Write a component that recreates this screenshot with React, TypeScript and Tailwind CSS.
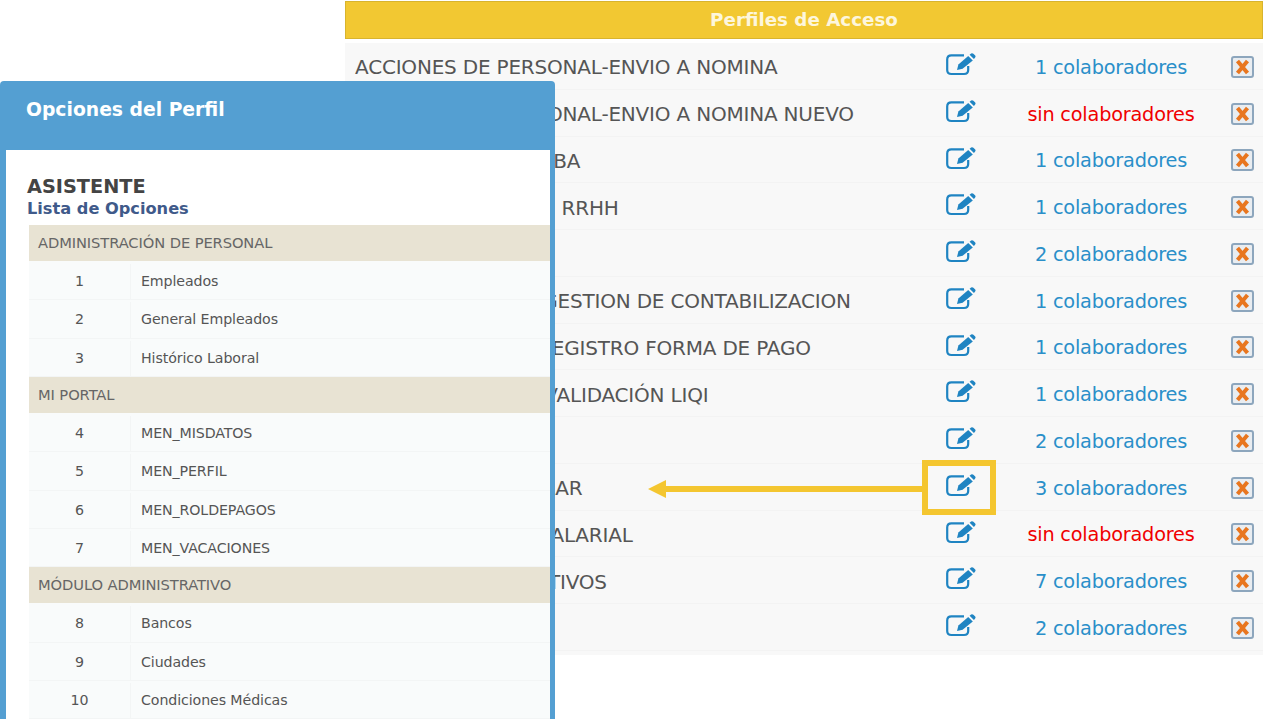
const perfiles = [
  { name: "ACCIONES DE PERSONAL-ENVIO A NOMINA", count: "1 colaboradores" },
  { name: "ACCIONES DE PERSONAL-ENVIO A NOMINA NUEVO", count: "sin colaboradores" },
  { name: "ANALISTA DEL PRUEBA", count: "1 colaboradores" },
  { name: "ASISTENTE GRAL DE RRHH", count: "1 colaboradores" },
  { name: "ASISTENTE", count: "2 colaboradores" },
  { name: "ASISTENTE ANUAL GESTION DE CONTABILIZACION", count: "1 colaboradores" },
  { name: "ASISTENTE DE UN REGISTRO FORMA DE PAGO", count: "1 colaboradores" },
  { name: "ASISTENTE MAYOR VALIDACIÓN LIQI", count: "1 colaboradores" },
  { name: "AUDITOR", count: "2 colaboradores" },
  { name: "ASISTENTE AL TITULAR", count: "3 colaboradores" },
  { name: "ESTRUCTURA DEL SALARIAL", count: "sin colaboradores" },
  { name: "AREAS ADMINISTRATIVOS", count: "7 colaboradores" },
  { name: "GERENCIA", count: "2 colaboradores" },
];

const opciones = [
  { group: "ADMINISTRACIÓN DE PERSONAL", items: [[1, "Empleados"], [2, "General Empleados"], [3, "Histórico Laboral"]] },
  { group: "MI PORTAL", items: [[4, "MEN_MISDATOS"], [5, "MEN_PERFIL"], [6, "MEN_ROLDEPAGOS"], [7, "MEN_VACACIONES"]] },
  { group: "MÓDULO ADMINISTRATIVO", items: [[8, "Bancos"], [9, "Ciudades"], [10, "Condiciones Médicas"]] },
];

function EditIcon() {
  return (
    <svg width="30" height="24" viewBox="0 0 30 24" fill="none">
      <path d="M18 2.4H5.4Q1.2 2.4 1.2 6.6V17Q1.2 21 5.4 21H18Q22.2 21 22.2 17V13" stroke="#1f84c2" strokeWidth="2.2" />
      <path d="M11 17L12.4 11.6L22.2 3L26.8 7.4L16.6 15.8Z" fill="#1f84c2" />
      <path d="M23.6 1.8L25.1 0.6Q26.2 -0.2 27.4 0.8L29.2 2.6Q30 3.7 29 4.8L27.9 6.1Z" fill="#1f84c2" />
    </svg>
  );
}

function DeleteIcon() {
  return (
    <svg width="23" height="22" viewBox="0 0 23 22" fill="none">
      <rect x="1" y="1" width="21" height="20" rx="2" fill="#e9edf1" stroke="#8da6bd" strokeWidth="2" />
      <path d="M6.5 5l10 12M16.5 5l-10 12" stroke="#e8761f" strokeWidth="4" />
    </svg>
  );
}

export default function App() {
  return (
    <div className="relative h-[719px] w-[1280px] overflow-hidden bg-white font-['DejaVu_Sans',sans-serif] text-[#555]">
      {/* Perfiles table */}
      <div className="ml-[345px] w-[918px] pt-px">
        <div className="flex h-[38px] items-center justify-center border border-[#d8b42e] bg-[#f2c832] text-[18.3px] font-bold text-[#fdf6dc]">
          Perfiles de Acceso
        </div>
        <div className="mt-1 bg-[#f8f8f8] pb-[4px]">
          {perfiles.map((p) => (
            <div key={p.name} className="grid h-[46.75px] grid-cols-[574px_81px_222px_41px] border-b border-[#f3f3f3]">
              <div className="flex items-center overflow-hidden whitespace-nowrap pl-[10px] pt-[3px] text-[20px] tracking-[-0.2px]">{p.name}</div>
              <div className="flex items-start justify-center pl-[3px] pt-[10px]">
                <EditIcon />
              </div>
              <div className={`flex items-center justify-center pt-[5px] text-[19.3px] tracking-[-0.2px] ${p.count.startsWith("sin") ? "text-[#f00000]" : "text-[#2a8fc9]"}`}>
                {p.count}
              </div>
              <div className="flex items-center justify-center pt-[2px]">
                <DeleteIcon />
              </div>
            </div>
          ))}
        </div>
      </div>

      {/* Highlight + arrow */}
      <div className="absolute left-[922px] top-[460px] h-[55px] w-[74px] border-[6px] border-[#f4c630]" />
      <svg className="absolute left-[648px] top-[480px]" width="274" height="18" viewBox="0 0 274 18">
        <path d="M0 9L18 0V6H274V12H18V18Z" fill="#f4c630" />
      </svg>

      {/* Opciones del Perfil panel */}
      <div className="absolute left-0 top-[81px] h-[660px] w-[555px] rounded-t-[4px] bg-[#549fd2]">
        <div className="h-[69px] pl-[26px] pt-[15px] text-[18.75px] font-bold text-white">Opciones del Perfil</div>
        <div className="ml-[6px] mr-[5px] h-[600px] bg-white pl-[21px] pt-[25px]">
          <div className="text-[19.3px] font-bold leading-[23px] text-[#444]">ASISTENTE</div>
          <div className="text-[16.2px] font-bold leading-[21px] text-[#3f5a8a]">Lista de Opciones</div>
          <div className="ml-[2px] mt-[6px] text-[14.2px] tracking-[-0.1px]">
            {opciones.map((o) => (
              <div key={o.group}>
                <div className="flex h-[37px] items-center border-b border-[#f9fbfb] bg-[#e8e3d3] pl-[9px] text-[14.7px] text-[#666]">{o.group}</div>
                {o.items.map(([n, label]) => (
                  <div key={n} className="grid h-[38.33px] grid-cols-[102px_1fr] border-b border-[#f3f5f5] bg-[#f9fbfb] pt-[2px]">
                    <div className="flex items-center justify-center border-r border-[#f3f5f5]">{n}</div>
                    <div className="flex items-center pl-[10px]">{label}</div>
                  </div>
                ))}
              </div>
            ))}
          </div>
        </div>
      </div>
    </div>
  );
}
